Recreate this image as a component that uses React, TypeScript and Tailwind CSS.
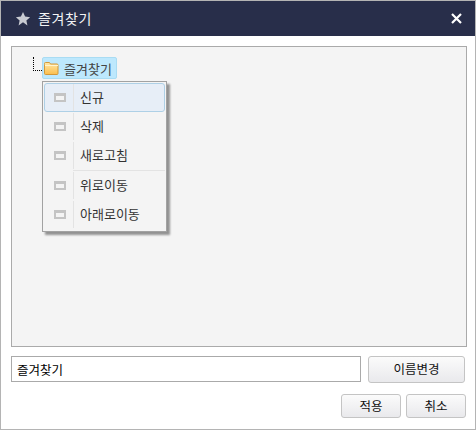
const KR = "font-['Noto_Sans_CJK_KR','Liberation_Sans',sans-serif]";

function MenuIcon() {
  return (
    <div className="w-[12px] h-[9px] bg-[#c4c4c4] flex items-start justify-center pt-[3px] shrink-0">
      <div className="w-[8px] h-[4px] bg-[#f4f4f4]" />
    </div>
  );
}

function MenuItem({ label, active }: { label: string; active?: boolean }) {
  return (
    <div
      className={
        active
          ? "h-[29px] flex items-center rounded-[3px] border border-[#aed0e6] bg-[#e7eef7]"
          : "h-[29px] flex items-center border border-transparent"
      }
    >
      <div className="w-[28px] flex justify-center pl-[1px]">
        <MenuIcon />
      </div>
      <div className="w-[1px] self-stretch bg-[#e3e3e3]" />
      <span className="pl-[6px] pb-[2px] text-[13px] text-[#333] leading-none">{label}</span>
    </div>
  );
}

function ActionButton({ label, className }: { label: string; className: string }) {
  return (
    <button
      className={`h-[24px] rounded-[3px] border border-[#c4c4c4] bg-gradient-to-b from-[#fbfbfb] to-[#e9e9ec] text-[12.500px] text-[#111] ${className}`}
    >
      {label}
    </button>
  );
}

export default function App() {
  return (
    <div className={`w-[476px] h-[430px] bg-white border border-[#b4b4b4] flex flex-col ${KR}`}>
      <header className="h-[35px] bg-[#282e4a] flex items-center pl-[14px] pr-[13px] shrink-0">
        <svg width="16" height="16" viewBox="0 0 16 16" className="shrink-0">
          <path d="M8 1l2.100 4.600 5 .6-3.700 3.400 1 5L8 11.200 3.600 14.600l1-5L.9 6.200l5-.6z" fill="#c9cbd2" />
        </svg>
        <span className="ml-[7px] text-[14px] tracking-[0.6px] text-[#f2f3f5]">즐겨찾기</span>
        <svg width="11" height="11" viewBox="0 0 11 11" className="ml-auto">
          <path d="M1 1l9 9M10 1l-9 9" stroke="#fff" strokeWidth="2.200" />
        </svg>
      </header>

      <div className="flex-1 flex flex-col pl-[10px] pr-[9px] pt-[10px]">
        <div className="relative h-[301px] w-[456px] border border-[#aaaaaa] bg-[#f4f4f4]">
          <div className="absolute left-[21px] top-[10px] w-[9px] h-[14px] border-l border-b border-dotted border-black" />
          <div className="absolute left-[30px] top-[10px] w-[75px] h-[22px] rounded-[2px] border border-[#a9dcf3] bg-[#bde8fd] flex items-center pl-[1px]">
            <svg width="15" height="13" viewBox="0 0 15 13">
              <defs>
                <linearGradient id="folder" x1="0" y1="0" x2="0" y2="1">
                  <stop offset="0" stopColor="#ffe9a8" />
                  <stop offset="1" stopColor="#fbbe4e" />
                </linearGradient>
              </defs>
              <path d="M.5 2.500V1.500a1 1 0 0 1 1-1h4l1 1.500h6.500a1 1 0 0 1 1 1v8.500a1 1 0 0 1-1 1h-11.500a1 1 0 0 1-1-1z" fill="url(#folder)" stroke="#d2983a" />
              <path d="M1 3.500h13" stroke="#fff4d0" />
            </svg>
            <span className="ml-[5px] text-[13px] text-[#444] leading-none">즐겨찾기</span>
          </div>
          <div className="absolute left-[30px] top-[34px] w-[125px] h-[151px] border border-[#a2a2a2] bg-[#f4f4f4] p-[1px] shadow-[3px_3px_2px_rgba(0,0,0,0.4)]">
            <MenuItem label="신규" active />
            <MenuItem label="삭제" />
            <MenuItem label="새로고침" />
            <div className="ml-[29px] h-[1px] bg-[#e3e3e3]" />
            <MenuItem label="위로이동" />
            <MenuItem label="아래로이동" />
          </div>
        </div>

        <div className="mt-[9px] flex gap-[7px]">
          <input
            readOnly
            value="즐겨찾기"
            className="w-[350px] h-[26px] border border-[#aaaaaa] px-[5px] text-[12.500px] text-black outline-none"
          />
          <ActionButton label="이름변경" className="w-[97px] h-[27px]" />
        </div>

        <div className="mt-[11px] flex justify-end gap-[5px]">
          <ActionButton label="적용" className="w-[60px]" />
          <ActionButton label="취소" className="w-[60px]" />
        </div>
      </div>
    </div>
  );
}
